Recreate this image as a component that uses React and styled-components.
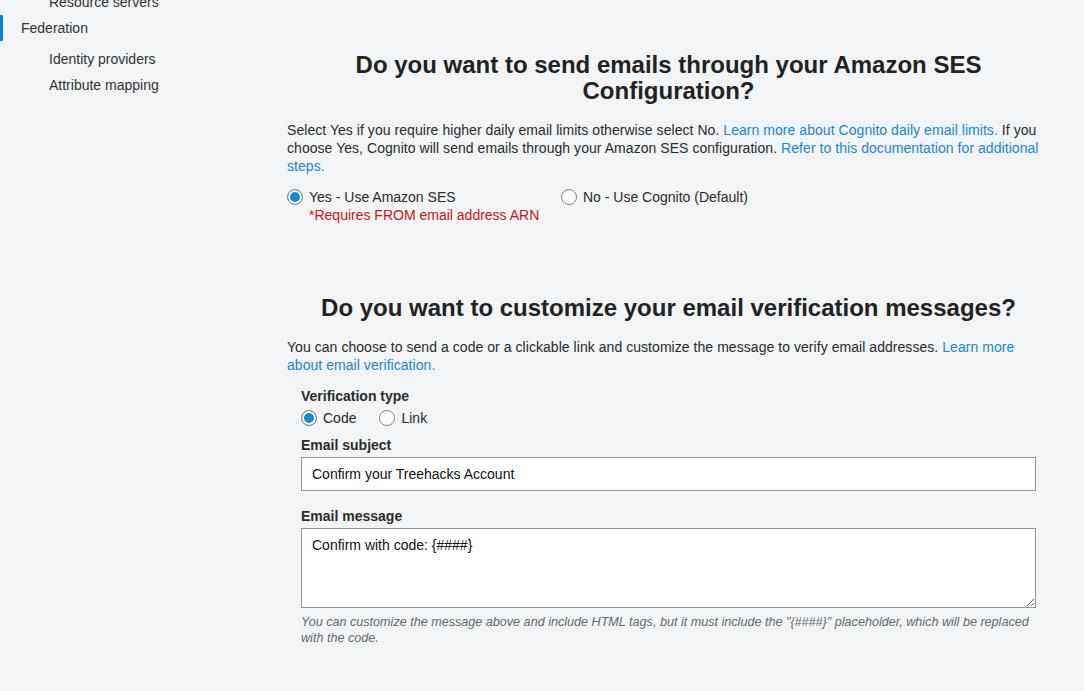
import React from 'react';
import styled, { createGlobalStyle } from 'styled-components';

const GlobalStyle = createGlobalStyle`
  html, body {
    margin: 0;
    padding: 0;
    background: #f2f4f5;
    font-family: "Liberation Sans", Arial, Helvetica, sans-serif;
    color: #2b2b2b;
    overflow: hidden;
  }
`;

const Page = styled.div`
  display: flex;
  height: 691px;
  background: #f2f4f5;
`;

const Sidebar = styled.nav`
  width: 260px;
  flex-shrink: 0;
  margin-top: -11px;
  font-size: 14px;
`;

const NavItem = styled.div`
  height: 26px;
  line-height: 26px;
  padding-left: ${(p) => (p.$sub ? '49px' : '21px')};
  color: #333;
  border-left: 3px solid ${(p) => (p.$active ? '#0b84d6' : 'transparent')};
  margin-bottom: ${(p) => (p.$gap ? '5px' : '0')};
  box-sizing: border-box;
  text-indent: -3px;
`;

const Main = styled.main`
  width: 763px;
  padding-left: 27px;
  padding-top: 52px;
`;

const Heading = styled.h2`
  margin: 0;
  font-size: 24px;
  line-height: 26px;
  font-weight: bold;
  text-align: center;
  color: #222;
  padding: 0 30px;
`;

const Para = styled.p`
  margin: 17px 0 0;
  font-size: 14px;
  line-height: 18px;
  letter-spacing: 0.05px;
  color: #2b2b2b;
`;

const A = styled.a`
  color: #1b87d0;
  text-decoration: none;
`;

const OptionRow = styled.div`
  display: flex;
  margin-top: ${(p) => p.$mt || '13px'};
  gap: ${(p) => p.$gap || '0'};
`;

const Option = styled.label`
  display: flex;
  align-items: flex-start;
  gap: 6px;
  width: ${(p) => p.$w || 'auto'};
  font-size: 14px;
  line-height: 18px;
  cursor: pointer;
`;

const Radio = styled.span`
  width: 16px;
  height: 16px;
  margin-top: 1px;
  flex-shrink: 0;
  box-sizing: border-box;
  border-radius: 50%;
  border: 1px solid #7f8a8c;
  background: ${(p) => (p.$checked ? '#1b87d0' : '#fff')};
  box-shadow: ${(p) => (p.$checked ? 'inset 0 0 0 2px #fff' : 'none')};
`;

const Note = styled.div`
  color: #c4161c;
  font-size: 14px;
  line-height: 18px;
`;

const Section = styled.section`
  margin-top: ${(p) => p.$mt || '0'};
`;

const Form = styled.div`
  padding: 0 14px;
  margin-top: 13px;
`;

const Label = styled.div`
  font-weight: bold;
  font-size: 14px;
  line-height: 18px;
  margin-top: ${(p) => p.$mt || '0'};
  color: #2b2b2b;
`;

const Input = styled.input`
  display: block;
  width: 100%;
  box-sizing: border-box;
  height: 34px;
  margin-top: 3px;
  padding: 0 10px;
  border: 1px solid #8f9799;
  background: #fff;
  font: 14px "Liberation Sans", Arial, sans-serif;
  color: #111;
  outline: none;
`;

const TextArea = styled.textarea`
  display: block;
  width: 100%;
  box-sizing: border-box;
  height: 80px;
  margin-top: 3px;
  padding: 7px 10px;
  border: 1px solid #8f9799;
  background: #fff;
  font: 14px/18px "Liberation Sans", Arial, sans-serif;
  color: #111;
  outline: none;
`;

const Help = styled.div`
  margin-top: 6px;
  font-size: 12.6px;
  line-height: 16px;
  font-style: italic;
  color: #5f6b70;
`;

export default function App() {
  return (
    <Page>
      <GlobalStyle />
      <Sidebar>
        <NavItem $sub>Resource servers</NavItem>
        <NavItem $active $gap>Federation</NavItem>
        <NavItem $sub>Identity providers</NavItem>
        <NavItem $sub>Attribute mapping</NavItem>
      </Sidebar>
      <Main>
        <Section>
          <Heading>Do you want to send emails through your Amazon SES Configuration?</Heading>
          <Para>
            Select Yes if you require higher daily email limits otherwise select No.{' '}
            <A href="#">Learn more about Cognito daily email limits.</A> If you choose Yes, Cognito will send
            emails through your Amazon SES configuration.{' '}
            <A href="#">Refer to this documentation for additional steps.</A>
          </Para>
          <OptionRow>
            <Option $w="274px">
              <Radio $checked />
              <div>
                Yes - Use Amazon SES
                <Note>*Requires FROM email address ARN</Note>
              </div>
            </Option>
            <Option>
              <Radio />
              <span>No - Use Cognito (Default)</span>
            </Option>
          </OptionRow>
        </Section>
        <Section $mt="71px">
          <Heading>Do you want to customize your email verification messages?</Heading>
          <Para>
            You can choose to send a code or a clickable link and customize the message to verify email addresses.{' '}
            <A href="#">Learn more about email verification.</A>
          </Para>
          <Form>
            <Label>Verification type</Label>
            <OptionRow $mt="4px" $gap="23px">
              <Option>
                <Radio $checked />
                <span>Code</span>
              </Option>
              <Option>
                <Radio />
                <span>Link</span>
              </Option>
            </OptionRow>
            <Label $mt="9px">Email subject</Label>
            <Input defaultValue="Confirm your Treehacks Account" />
            <Label $mt="16px">Email message</Label>
            <TextArea defaultValue="Confirm with code: {####}" />
            <Help>
              You can customize the message above and include HTML tags, but it must include the "{'{####}'}"
              placeholder, which will be replaced with the code.
            </Help>
          </Form>
        </Section>
      </Main>
    </Page>
  );
}
